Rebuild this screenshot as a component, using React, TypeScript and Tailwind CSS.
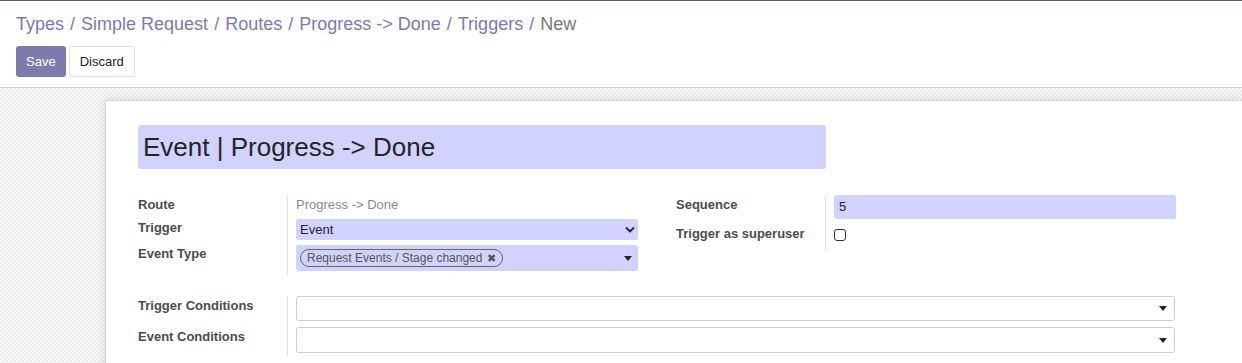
import React from 'react';

const Caret = () => (
  <svg width="8" height="5" viewBox="0 0 8 5" className="shrink-0">
    <path d="M0 0h8L4 5z" fill="#222" />
  </svg>
);

const Chevron = () => (
  <svg width="10" height="7" viewBox="0 0 10 7" className="shrink-0">
    <path d="M1 1.5l4 4 4-4" fill="none" stroke="#222" strokeWidth="1.8" />
  </svg>
);

const crumbs = ['Types', 'Simple Request', 'Routes', 'Progress -> Done', 'Triggers'];

export default function App() {
  return (
    <div className="w-full h-[363px] overflow-hidden bg-white font-['Liberation_Sans',Arial,sans-serif] text-[13px] text-[#4c4c4c]">
      <div className="border-t border-[#5b5a6e] border-b border-b-[#cfcfcf] px-4 pt-[12px] pb-[10px]">
        <div className="text-[18px] leading-[22px] text-[#7c7bad]">
          {crumbs.map(c => (
            <React.Fragment key={c}>
              <span>{c}</span>
              <span className="mx-[6px]">/</span>
            </React.Fragment>
          ))}
          <span className="text-[#777]">New</span>
        </div>
        <div className="flex gap-[3px] mt-[11px]">
          <button className="h-[31px] px-[10px] rounded-[3px] bg-[#7c7bad] text-white text-[13px]">Save</button>
          <button className="h-[31px] px-[10px] rounded-[3px] bg-white border border-[#dee2e6] text-[#222] text-[13px]">Discard</button>
        </div>
      </div>

      <div className="pt-[12px] h-full bg-[#f4f4f4] bg-[image:repeating-conic-gradient(#ececec_0_25%,#f8f8f8_0_50%)] bg-[length:4px_4px]">
        <div className="ml-[105px] bg-white border-t border-l border-[#d6d6d6] shadow-[0_0_10px_rgba(0,0,0,0.12)] h-full pl-[32px] pt-[24px]">
          <div className="w-[688px] h-[44px] bg-[#d2d2ff] rounded-[3px] flex items-center pl-[5px] text-[26px] text-[#212529]">
            Event | Progress -&gt; Done
          </div>

          <div className="flex gap-[38px] mt-[26px]">
            <div className="w-[500px] grid grid-cols-[149px_1fr]">
              <div className="h-[21px] flex items-center font-bold pb-[2px]">Route</div>
              <div className="h-[21px] border-l border-[#e2e2e2] pl-[8px] flex items-center pb-[2px] text-[#8a8a8a]">Progress -&gt; Done</div>

              <div className="h-[24px] flex items-center font-bold">Trigger</div>
              <div className="h-[24px] border-l border-[#e2e2e2] pl-[8px] pt-[3px]">
                <div className="h-[21px] bg-[#d2d2ff] rounded-[3px] flex items-center justify-between pl-[4px] pr-[3px] text-[#212529]">
                  <span>Event</span>
                  <Chevron />
                </div>
              </div>

              <div className="h-[35px] font-bold pt-[4px]">Event Type</div>
              <div className="h-[35px] border-l border-[#e2e2e2] pl-[8px] pt-[5px]">
                <div className="h-[26px] bg-[#d2d2ff] rounded-[3px] flex items-center justify-between pl-[4px] pr-[6px]">
                  <span className="h-[18px] flex items-center border-[1.5px] border-[#666] rounded-full px-[6px] text-[12px] text-[#555] gap-[5px]">
                    Request Events / Stage changed
                    <span className="text-[11px] text-[#555]">✖</span>
                  </span>
                  <Caret />
                </div>
              </div>
            </div>

            <div className="w-[500px] grid grid-cols-[149px_1fr] content-start">
              <div className="h-[24px] font-bold">Sequence</div>
              <div className="h-[24px] border-l border-[#e2e2e2] pl-[8px]">
                <div className="h-[24px] w-[342px] bg-[#d2d2ff] rounded-[3px] flex items-center pl-[5px] text-[#212529]">5</div>
              </div>

              <div className="h-[31px] font-bold flex items-center pb-[2px]">Trigger as superuser</div>
              <div className="h-[31px] border-l border-[#e2e2e2] pl-[8px] pt-[10px]">
                <div className="w-[12px] h-[12px] border border-[#333] rounded-[3px] bg-white" />
              </div>
            </div>
          </div>

          <div className="w-[1037px] grid grid-cols-[149px_1fr] mt-[21px]">
            <div className="h-[31px] font-bold">Trigger Conditions</div>
            <div className="h-[31px] border-l border-[#e2e2e2] pl-[8px]">
              <div className="h-[25px] bg-white border border-[#cfcfcf] rounded-[3px] flex items-center justify-end pr-[7px]">
                <Caret />
              </div>
            </div>

            <div className="h-[29px] font-bold">Event Conditions</div>
            <div className="h-[29px] border-l border-[#e2e2e2] pl-[8px]">
              <div className="h-[26px] bg-white border border-[#cfcfcf] rounded-[3px] flex items-center justify-end pr-[7px]">
                <Caret />
              </div>
            </div>
          </div>
        </div>
      </div>
    </div>
  );
}
